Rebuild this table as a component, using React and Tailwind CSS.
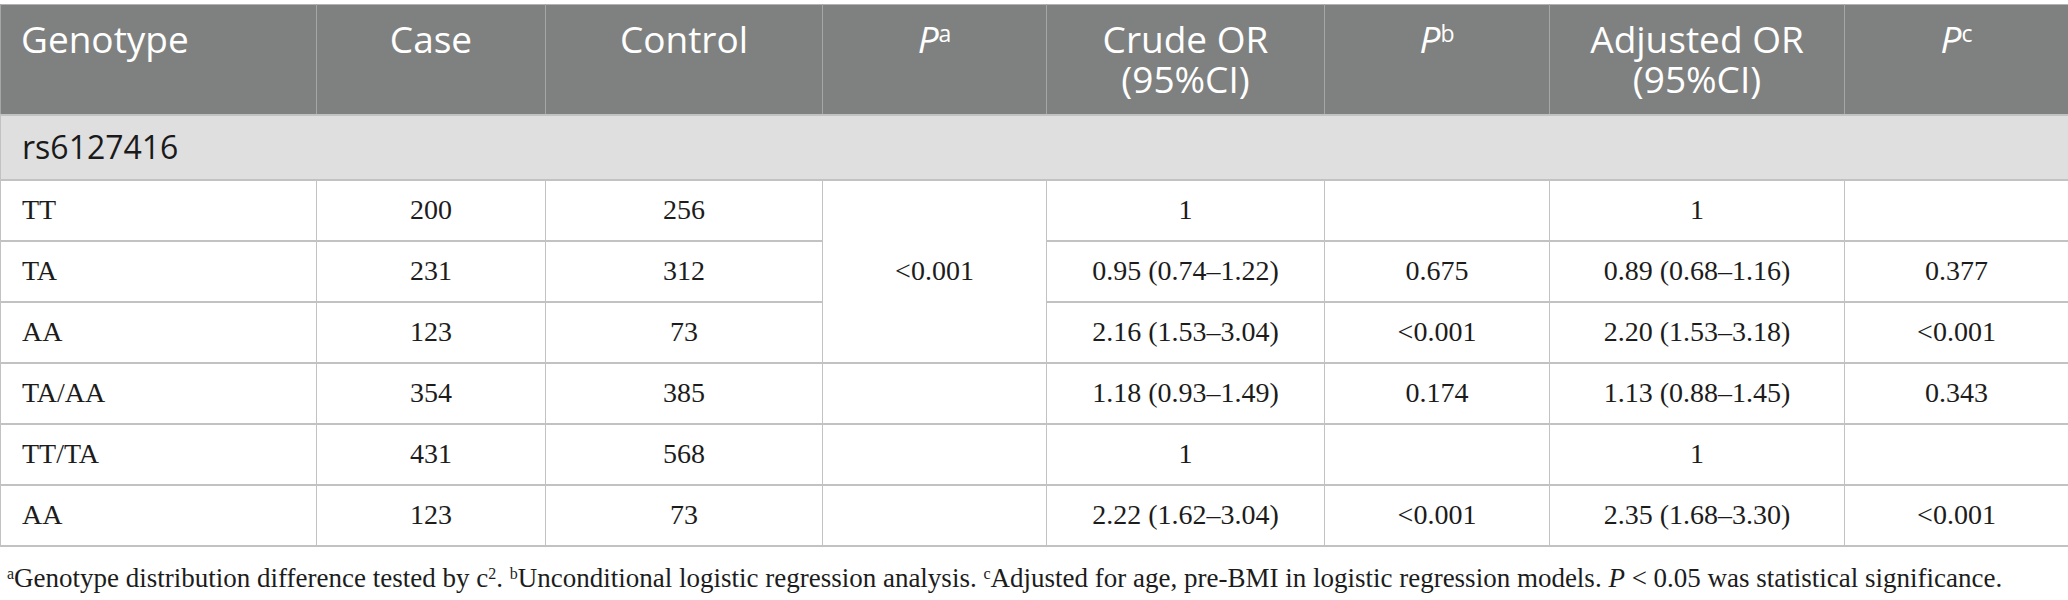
import React from 'react';

const cols = [316, 229, 277, 224, 278, 225, 295, 224];

const rows = [
    { g: 'TT', c: '200', k: '256', cr: '1', pb: '', ad: '1', pc: '' },
    { g: 'TA', c: '231', k: '312', cr: '0.95 (0.74–1.22)', pb: '0.675', ad: '0.89 (0.68–1.16)', pc: '0.377' },
    { g: 'AA', c: '123', k: '73', cr: '2.16 (1.53–3.04)', pb: '<0.001', ad: '2.20 (1.53–3.18)', pc: '<0.001' },
    { g: 'TA/AA', c: '354', k: '385', cr: '1.18 (0.93–1.49)', pb: '0.174', ad: '1.13 (0.88–1.45)', pc: '0.343' },
    { g: 'TT/TA', c: '431', k: '568', cr: '1', pb: '', ad: '1', pc: '' },
    { g: 'AA', c: '123', k: '73', cr: '2.22 (1.62–3.04)', pb: '<0.001', ad: '2.35 (1.68–3.30)', pc: '<0.001' },
];

const sans = { fontFamily: '"Open Sans", "Noto Sans", sans-serif' };
const serif = { fontFamily: '"Liberation Serif", "Times New Roman", serif' };

const Th = ({ children, left }) => (
    <th
        className={`h-[110px] align-top pt-[14px] px-[20px] border-x border-[#a6a6a6] bg-[#7f8180] text-white font-normal text-[37px] leading-[40px] ${left ? 'text-left' : 'text-center'}`}
    >
        {children}
    </th>
);

const PHead = ({ s }) => (
    <span>
        <i>P</i>
        <sup className="text-[23px] relative -top-[11px]">{s}</sup>
    </span>
);

const Td = ({ children, left, rowSpan }) => (
    <td
        rowSpan={rowSpan}
        className={`h-[61px] align-middle border-x border-y-2 border-[#c2c2c2] text-[28px] leading-[32px] text-[#1c1c1c] ${left ? 'text-left pl-[21px]' : 'text-center'}`}
    >
        {children}
    </td>
);

const App = () => {
    return (
        <div className="w-[2068px] h-[600px] bg-white pt-[4px] overflow-hidden">
            <table className="w-[2068px] table-fixed border-collapse">
                <colgroup>
                    {cols.map((w, i) => (
                        <col key={i} style={{ width: w }} />
                    ))}
                </colgroup>
                <thead style={sans}>
                    <tr className="border-t border-[#b3b3b3]">
                        <Th left>Genotype</Th>
                        <Th>Case</Th>
                        <Th>Control</Th>
                        <Th><PHead s="a" /></Th>
                        <Th>Crude OR (95%CI)</Th>
                        <Th><PHead s="b" /></Th>
                        <Th>Adjusted OR (95%CI)</Th>
                        <Th><PHead s="c" /></Th>
                    </tr>
                </thead>
                <tbody style={serif}>
                    <tr>
                        <td
                            colSpan={8}
                            style={sans}
                            className="h-[65px] align-middle pl-[21px] bg-[#e0dfe0] border-y-2 border-x border-[#c2c2c2] text-[32px] leading-[40px] text-[#1a1a1a]"
                        >
                            rs6127416
                        </td>
                    </tr>
                    {rows.map((r, i) => (
                        <tr key={i}>
                            <Td left>{r.g}</Td>
                            <Td>{r.c}</Td>
                            <Td>{r.k}</Td>
                            {i === 0 && <Td rowSpan={3}>&lt;0.001</Td>}
                            {i > 2 && <Td />}
                            <Td>{r.cr}</Td>
                            <Td>{r.pb}</Td>
                            <Td>{r.ad}</Td>
                            <Td>{r.pc}</Td>
                        </tr>
                    ))}
                </tbody>
            </table>
            <p style={serif} className="mt-[16px] pl-[7px] text-[27px] leading-[30px] text-[#1c1c1c] whitespace-nowrap">
                <sup className="text-[16px]">a</sup>Genotype distribution difference tested by c<sup className="text-[16px]">2</sup>.{' '}
                <sup className="text-[16px]">b</sup>Unconditional logistic regression analysis.{' '}
                <sup className="text-[16px]">c</sup>Adjusted for age, pre-BMI in logistic regression models. <i>P</i> &lt; 0.05 was statistical significance.
            </p>
        </div>
    );
};

export default App;
